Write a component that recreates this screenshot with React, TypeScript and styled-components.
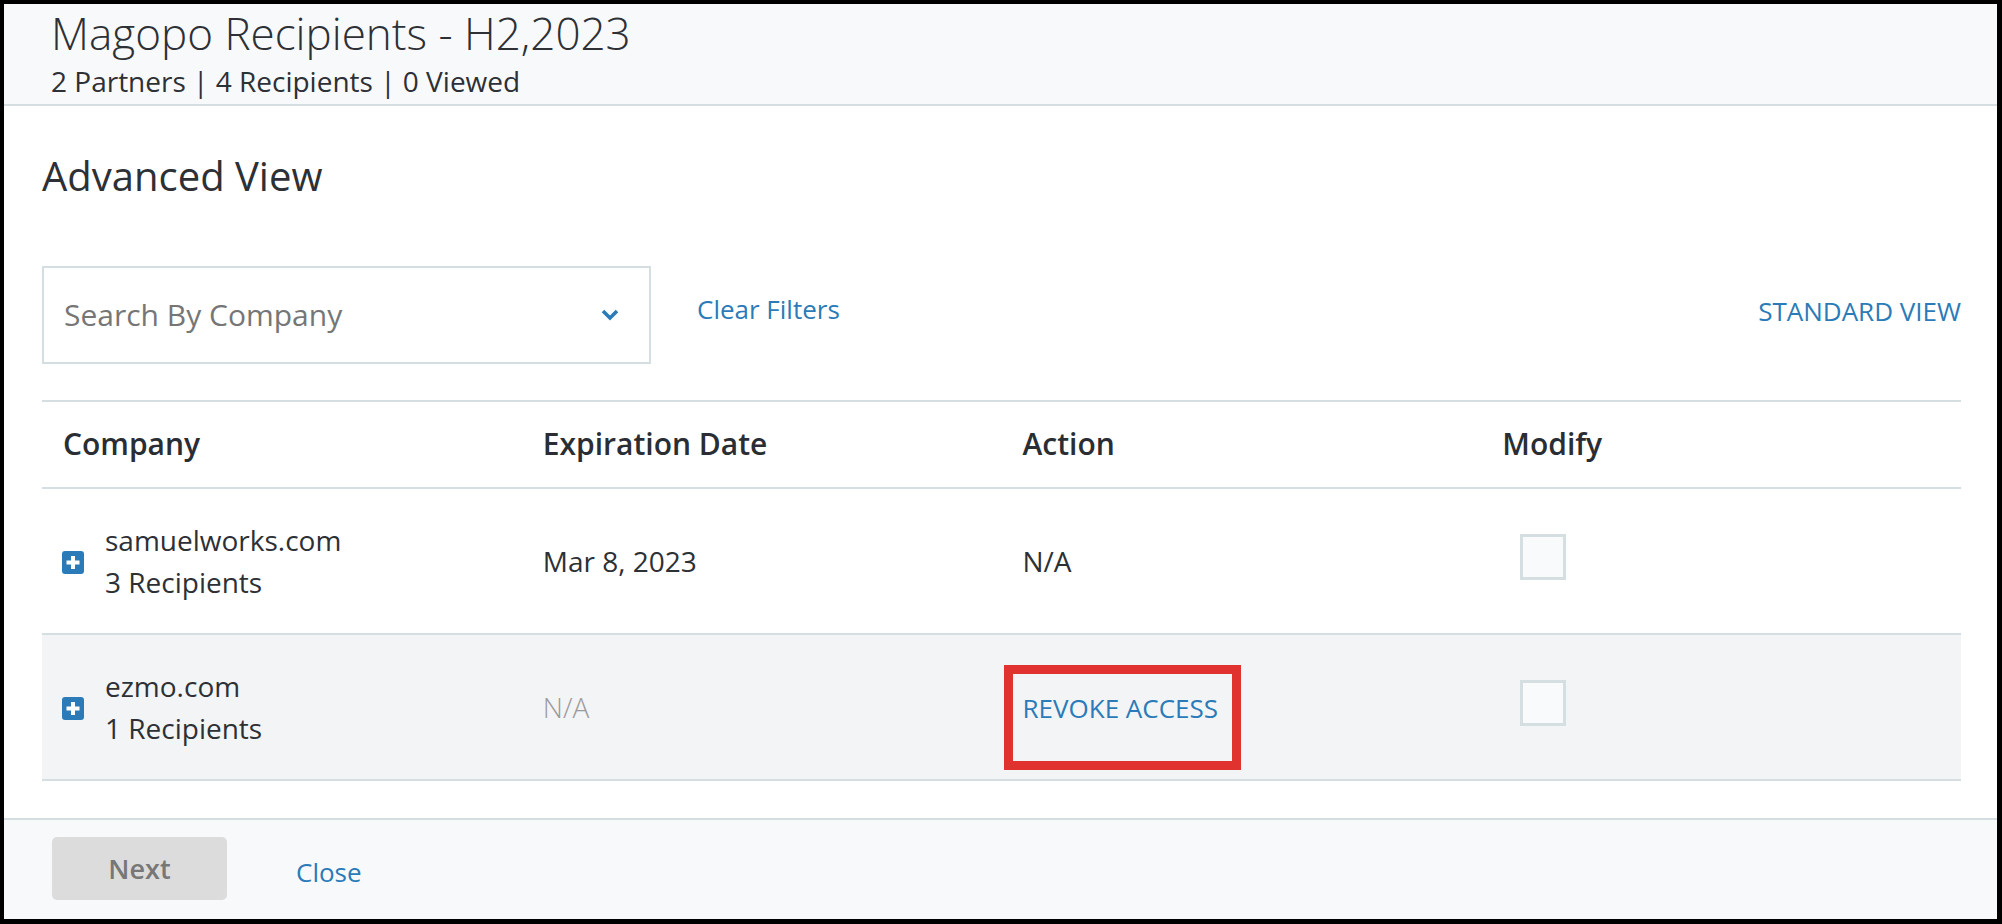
import styled, { createGlobalStyle } from 'styled-components';

const GlobalStyle = createGlobalStyle`
  html, body {
    margin: 0;
    padding: 0;
    background: #ffffff;
  }
  body {
    font-family: "Open Sans", "Liberation Sans", sans-serif;
    color: #2d3035;
  }
  * {
    box-sizing: border-box;
  }
`;

const Frame = styled.div`
  width: 2002px;
  height: 924px;
  border: 4px solid #000;
  border-right-width: 5px;
  border-bottom-width: 5px;
  display: flex;
  flex-direction: column;
  background: #fff;
  overflow: hidden;
`;

const Header = styled.header`
  background: #f8f9fb;
  border-bottom: 2px solid #d5dee1;
  padding: 3px 47px 5px;
`;

const Title = styled.h1`
  font-size: 44px;
  font-weight: 300;
  line-height: 52px;
  margin: 0;
  color: #2d3035;
`;

const Subtitle = styled.div`
  font-size: 28px;
  line-height: 36px;
  margin-top: 4px;
  color: #2d3035;
`;

const Body = styled.main`
  flex: 1;
  padding: 0 36px 0 38px;
`;

const SectionTitle = styled.h2`
  font-size: 40px;
  font-weight: 400;
  line-height: 54px;
  margin: 43px 0 0;
  color: #2d3035;
`;

const Toolbar = styled.div`
  display: flex;
  align-items: center;
  margin-top: 63px;
`;

const SearchSelect = styled.div`
  width: 609px;
  height: 98px;
  border: 2px solid #d5dee1;
  display: flex;
  align-items: center;
  justify-content: space-between;
  padding: 0 30px 0 20px;
  font-size: 30px;
  line-height: 40px;
  color: #767676;
`;

const TextLink = styled.a<{ $upper?: boolean }>`
  color: #2a7bb8;
  font-size: 26px;
  text-transform: ${(p) => (p.$upper ? 'uppercase' : 'none')};
  text-decoration: none;
  cursor: pointer;
`;

const ClearLink = styled(TextLink)`
  margin-left: 46px;
  margin-top: -13px;
`;

const ViewLink = styled(TextLink)`
  margin-left: auto;
  margin-top: -8px;
`;

const Table = styled.div`
  margin-top: 36px;
  border-top: 2px solid #d5dee1;
`;

const Row = styled.div<{ $head?: boolean; $shaded?: boolean }>`
  display: grid;
  grid-template-columns: repeat(4, 1fr);
  align-items: center;
  height: ${(p) => (p.$head ? '87px' : '146px')};
  border-bottom: 2px solid #d5dee1;
  background: ${(p) => (p.$shaded ? '#f3f4f6' : 'transparent')};
`;

const HeadCell = styled.div`
  padding-left: 21px;
  font-size: 30px;
  font-weight: 600;
  line-height: 40px;
  margin-top: -2px;
  color: #2a2e34;
`;

const Cell = styled.div<{ $muted?: boolean }>`
  padding-left: 21px;
  font-size: 28px;
  line-height: 42px;
  font-weight: ${(p) => (p.$muted ? 300 : 400)};
  color: ${(p) => (p.$muted ? '#9b9b9b' : '#2d3035')};
`;

const CompanyCell = styled(Cell)`
  display: flex;
  align-items: center;
  gap: 21px;
  padding-left: 20px;
`;

const ExpandIcon = styled.svg`
  flex: none;
  margin-top: 2px;
`;

const Highlight = styled.span`
  position: relative;
  display: inline-block;
  font-size: 26px;
  font-weight: 400;
  color: #2a7bb8;
  text-transform: uppercase;

  &::after {
    content: '';
    position: absolute;
    left: -19px;
    right: -23px;
    top: -22px;
    bottom: -41px;
    border: 9px solid #e0332f;
  }
`;

const Checkbox = styled.div`
  width: 46px;
  height: 46px;
  margin-left: 18px;
  border: 3px solid #d5dfe2;
  background: #f8fafc;
  margin-top: -8px;
`;

const Footer = styled.footer`
  background: #f8f9fb;
  border-top: 2px solid #d5dee1;
  height: 101px;
  display: flex;
  align-items: center;
  padding: 0 0 3px 48px;
  gap: 69px;
`;

const NextButton = styled.button`
  width: 175px;
  height: 63px;
  border: none;
  border-radius: 5px;
  background: #dcdcdc;
  color: #777;
  font-family: inherit;
  font-size: 27px;
  font-weight: 600;
  cursor: default;
`;

const CloseLink = styled(TextLink)`
  margin-top: 8px;
`;

function Chevron() {
  return (
    <svg width="18" height="12" viewBox="0 0 18 12">
      <polyline points="2,2 9,9 16,2" fill="none" stroke="#2a7bb8" strokeWidth="3.6" />
    </svg>
  );
}

function PlusBox() {
  return (
    <ExpandIcon width="22" height="23" viewBox="0 0 22 23">
      <rect x="0" y="0" width="22" height="23" rx="3" fill="#2a7bb8" />
      <line x1="11" y1="5" x2="11" y2="18" stroke="#fff" strokeWidth="4" />
      <line x1="4.5" y1="11.5" x2="17.5" y2="11.5" stroke="#fff" strokeWidth="4" />
    </ExpandIcon>
  );
}

const rows = [
  { company: 'samuelworks.com', recipients: '3 Recipients', date: 'Mar 8, 2023', revoke: false },
  { company: 'ezmo.com', recipients: '1 Recipients', date: 'N/A', revoke: true },
];

export default function App() {
  return (
    <>
      <GlobalStyle />
      <Frame>
        <Header>
          <Title>Magopo Recipients - H2,2023</Title>
          <Subtitle>2 Partners | 4 Recipients | 0 Viewed</Subtitle>
        </Header>

        <Body>
          <SectionTitle>Advanced View</SectionTitle>

          <Toolbar>
            <SearchSelect>
              <span>Search By Company</span>
              <Chevron />
            </SearchSelect>
            <ClearLink>Clear Filters</ClearLink>
            <ViewLink $upper>Standard View</ViewLink>
          </Toolbar>

          <Table>
            <Row $head>
              <HeadCell>Company</HeadCell>
              <HeadCell>Expiration Date</HeadCell>
              <HeadCell>Action</HeadCell>
              <HeadCell>Modify</HeadCell>
            </Row>
            {rows.map((r) => (
              <Row key={r.company} $shaded={r.revoke}>
                <CompanyCell>
                  <PlusBox />
                  <div>
                    <div>{r.company}</div>
                    <div>{r.recipients}</div>
                  </div>
                </CompanyCell>
                <Cell $muted={r.date === 'N/A'}>{r.date}</Cell>
                <Cell>{r.revoke ? <Highlight>Revoke Access</Highlight> : 'N/A'}</Cell>
                <Cell>
                  <Checkbox />
                </Cell>
              </Row>
            ))}
          </Table>
        </Body>

        <Footer>
          <NextButton>Next</NextButton>
          <CloseLink>Close</CloseLink>
        </Footer>
      </Frame>
    </>
  );
}
